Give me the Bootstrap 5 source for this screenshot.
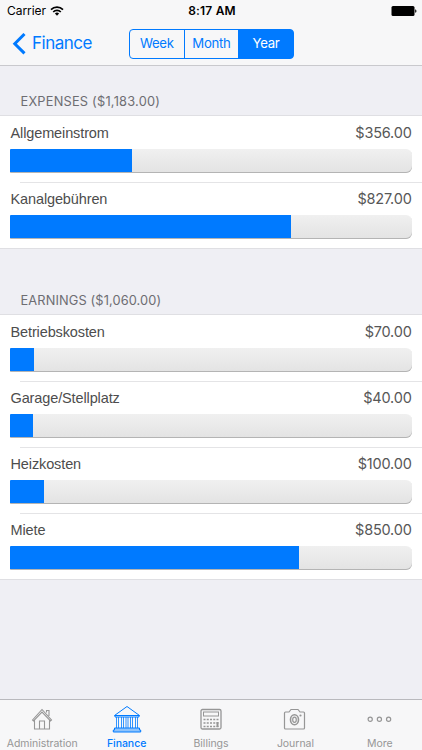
<!DOCTYPE html>
<html lang="en">
<head>
    <meta charset="UTF-8">
    <meta name="viewport" content="width=device-width, initial-scale=1">
    <title>Finance</title>
    <link href="https://cdn.jsdelivr.net/npm/bootstrap@5.3.0/dist/css/bootstrap.min.css" rel="stylesheet">
    <style>
        :root {
            --ios-blue: #007aff;
        }
        body {
            font-family: Inter, Roboto, sans-serif;
            background: #efeff4;
            height: 750px;
            overflow: hidden;
        }
        svg { display: block; }

        /* status bar + navigation bar */
        .top-bar {
            height: 66px;
            background: #f7f7f8;
            border-bottom: 1px solid #c9c9cd;
        }
        .status-line {
            height: 22px;
            padding: 0 5px 0 7px;
            font-size: 12px;
            line-height: 22px;
            color: #000;
        }
        .carrier { letter-spacing: -.05px; }
        .clock { font-weight: 600; letter-spacing: .2px; }
        .nav-line { height: 43px; padding-left: 12px; }
        .back-link {
            width: 117px;
            gap: 6px;
            color: var(--ios-blue);
            font-size: 17px;
            letter-spacing: -.5px;
        }
        .period .btn {
            --bs-btn-color: var(--ios-blue);
            --bs-btn-border-color: var(--ios-blue);
            --bs-btn-active-color: #fff;
            --bs-btn-active-bg: var(--ios-blue);
            --bs-btn-active-border-color: var(--ios-blue);
            --bs-btn-border-radius: 4px;
            width: 55.6px;
            height: 30px;
            padding: 0;
            font-size: 13.2px;
            line-height: 27px;
            letter-spacing: -.3px;
        }

        /* grouped list */
        .group-title {
            height: 50px;
            padding: 26px 0 0 20.5px;
            font-size: 12.8px;
            line-height: 20px;
            letter-spacing: .22px;
            color: #6d6d72;
        }
        .group-title.later { height: 67px; padding-top: 43px; letter-spacing: .13px; }
        .entries {
            background: #fff;
            box-shadow: 0 0 0 1px #dfdfe3;
        }
        .entry { height: 66px; padding: 7px 10.4px 0 10px; }
        .entry + .entry {
            background: linear-gradient(#e4e4e6, #e4e4e6) 20px 0 / 100% 1px no-repeat;
        }
        .entry-head {
            height: 26px;
            font-size: 14.5px;
            line-height: 20px;
            color: #4d4d4d;
        }
        .entry-name {
            font-family: "Liberation Sans", Arial, sans-serif;
            padding-left: .5px;
            letter-spacing: -.12px;
        }
        .entry-sum { letter-spacing: -.2px; color: #575757; }
        .meter {
            height: 24px;
            background: linear-gradient(#f0f0f0, #e3e3e3);
            border-radius: 1px 6px 6px 1px;
            box-shadow: inset 0 -1px 0 #b4b4b4;
        }
        .meter .progress-bar { background: var(--ios-blue); height: 23px; }

        /* tab bar */
        .tab-bar {
            height: 51px;
            background: #f7f7f8;
            border-top: 1px solid #b9b9bd;
            color: #969696;
            font-size: 10.5px;
        }
        .tab-cell { flex: 1 1 0; padding-top: 4px; }
        .tab-cell svg { height: 30px; width: 32px; flex-shrink: 0; }
        .tab-cell span { line-height: 14px; margin-top: 3px; letter-spacing: -.03px; }
        .tab-cell.active { color: var(--ios-blue); }
        .tab-cell.active span { font-weight: 500; }
    </style>
</head>
<body class="d-flex flex-column">
<header class="top-bar flex-shrink-0">
    <div class="status-line d-flex justify-content-between">
        <div class="col d-flex align-items-center">
            <span class="carrier">Carrier</span>
            <svg class="ms-1" width="14" height="10" viewBox="0 0 14 10" fill="none" stroke="#000" stroke-width="1.7">
                <path d="M1 3.6a8.4 8.4 0 0 1 12 0M3.2 6a5.4 5.4 0 0 1 7.6 0"/>
                <path d="M7 9.8 4.9 7.6a3 3 0 0 1 4.2 0z" fill="#000" stroke="none"/>
            </svg>
        </div>
        <div class="clock">8:17 AM</div>
        <div class="col d-flex align-items-center justify-content-end">
            <svg width="26" height="10" viewBox="0 0 26 10">
                <rect x=".5" width="23" height="10" rx="1.5"/>
                <path d="M24.2 3.2c1.7.4 1.7 3.2 0 3.6z"/>
            </svg>
        </div>
    </div>
    <nav class="nav-line d-flex align-items-center">
        <a class="back-link d-flex align-items-center text-decoration-none" href="#">
            <svg width="14" height="22" viewBox="0 0 14 22" fill="none" stroke="currentColor" stroke-width="3">
                <path d="M12.5 1 2.8 10.7l9.7 9.7"/>
            </svg>
            <span>Finance</span>
        </a>
        <div class="period btn-group">
            <button type="button" class="btn">Week</button>
            <button type="button" class="btn">Month</button>
            <button type="button" class="btn active">Year</button>
        </div>
    </nav>
</header>

<main class="flex-grow-1">
    <h2 class="group-title fw-normal m-0">EXPENSES ($1,183.00)</h2>
    <div class="entries">
        <div class="entry">
            <div class="entry-head d-flex justify-content-between">
                <span class="entry-name">Allgemeinstrom</span>
                <span class="entry-sum">$356.00</span>
            </div>
            <div class="meter progress"><div class="progress-bar" style="width: 30.3%"></div></div>
        </div>
        <div class="entry">
            <div class="entry-head d-flex justify-content-between">
                <span class="entry-name">Kanalgebühren</span>
                <span class="entry-sum">$827.00</span>
            </div>
            <div class="meter progress"><div class="progress-bar" style="width: 69.9%"></div></div>
        </div>
    </div>

    <h2 class="group-title later fw-normal m-0">EARNINGS ($1,060.00)</h2>
    <div class="entries">
        <div class="entry">
            <div class="entry-head d-flex justify-content-between">
                <span class="entry-name">Betriebskosten</span>
                <span class="entry-sum">$70.00</span>
            </div>
            <div class="meter progress"><div class="progress-bar" style="width: 5.9%"></div></div>
        </div>
        <div class="entry">
            <div class="entry-head d-flex justify-content-between">
                <span class="entry-name">Garage/Stellplatz</span>
                <span class="entry-sum">$40.00</span>
            </div>
            <div class="meter progress"><div class="progress-bar" style="width: 5.7%"></div></div>
        </div>
        <div class="entry">
            <div class="entry-head d-flex justify-content-between">
                <span class="entry-name">Heizkosten</span>
                <span class="entry-sum">$100.00</span>
            </div>
            <div class="meter progress"><div class="progress-bar" style="width: 8.5%"></div></div>
        </div>
        <div class="entry">
            <div class="entry-head d-flex justify-content-between">
                <span class="entry-name">Miete</span>
                <span class="entry-sum">$850.00</span>
            </div>
            <div class="meter progress"><div class="progress-bar" style="width: 71.9%"></div></div>
        </div>
    </div>
</main>

<footer class="tab-bar d-flex flex-shrink-0">
    <div class="tab-cell d-flex flex-column align-items-center">
        <svg viewBox="0 0 32 30" fill="none" stroke="currentColor" stroke-width="1.1">
            <path d="M6.5 16 16 5.5 25.5 16l-1 1L16 8l-8.5 9zM8.5 16v9h15v-9M20.5 8.500V6.500h2.500v5.500M13.500 25v-8h5v8"/>
        </svg>
        <span>Administration</span>
    </div>
    <div class="tab-cell active d-flex flex-column align-items-center">
        <svg viewBox="0 0 32 30" fill="none" stroke="currentColor" stroke-width="1">
            <path d="M3.5 11.5 16 2.5l12.5 9zM4 11.5v1.500h24v-1.500"/>
            <path d="M5.5 13v11M7.5 13v11M10.5 13v11M12.5 13v11M15 13v11M17 13v11M19.5 13v11M21.5 13v11M24.5 13v11M26.5 13v11" stroke-width=".8"/>
            <path d="M3.5 24h25v2h1.200v2H2.300v-2h1.200z" fill="#8ec3fb"/>
        </svg>
        <span>Finance</span>
    </div>
    <div class="tab-cell d-flex flex-column align-items-center">
        <svg viewBox="0 0 32 30" fill="none" stroke="currentColor" stroke-width="1">
            <rect x="6" y="5.5" width="20" height="19.5" rx="1.5" stroke-width="1.3"/>
            <rect x="8.5" y="8" width="15" height="4"/>
            <path d="M8.5 15.5h15M8.5 19h15M8.5 22.5h15" stroke-width="1.6" stroke-dasharray="2 1.25"/>
            <path d="M22.5 18v5" stroke-width="2"/>
        </svg>
        <span>Billings</span>
    </div>
    <div class="tab-cell d-flex flex-column align-items-center">
        <svg viewBox="0 0 32 30" fill="none" stroke="currentColor" stroke-width="1.2">
            <path d="M6.5 8H10l2-2.500h7L21 8h3.500q1 0 1 1v15q0 1-1 1h-18q-1 0-1-1V9q0-1 1-1z"/>
            <ellipse cx="15.5" cy="15.7" rx="4" ry="5" stroke-width="1.6"/>
            <ellipse cx="15.5" cy="15.7" rx="1.8" ry="2.6"/>
            <circle cx="21.5" cy="11.5" r=".5"/>
        </svg>
        <span>Journal</span>
    </div>
    <div class="tab-cell d-flex flex-column align-items-center">
        <svg viewBox="0 0 32 30" fill="none" stroke="currentColor" stroke-width="1.2">
            <circle cx="6.2" cy="15.3" r="2.1"/>
            <circle cx="15.4" cy="15.3" r="2.1"/>
            <circle cx="24.6" cy="15.3" r="2.1"/>
        </svg>
        <span>More</span>
    </div>
</footer>
<script src="https://cdn.jsdelivr.net/npm/bootstrap@5.3.0/dist/js/bootstrap.bundle.min.js"></script>
</body>
</html>
